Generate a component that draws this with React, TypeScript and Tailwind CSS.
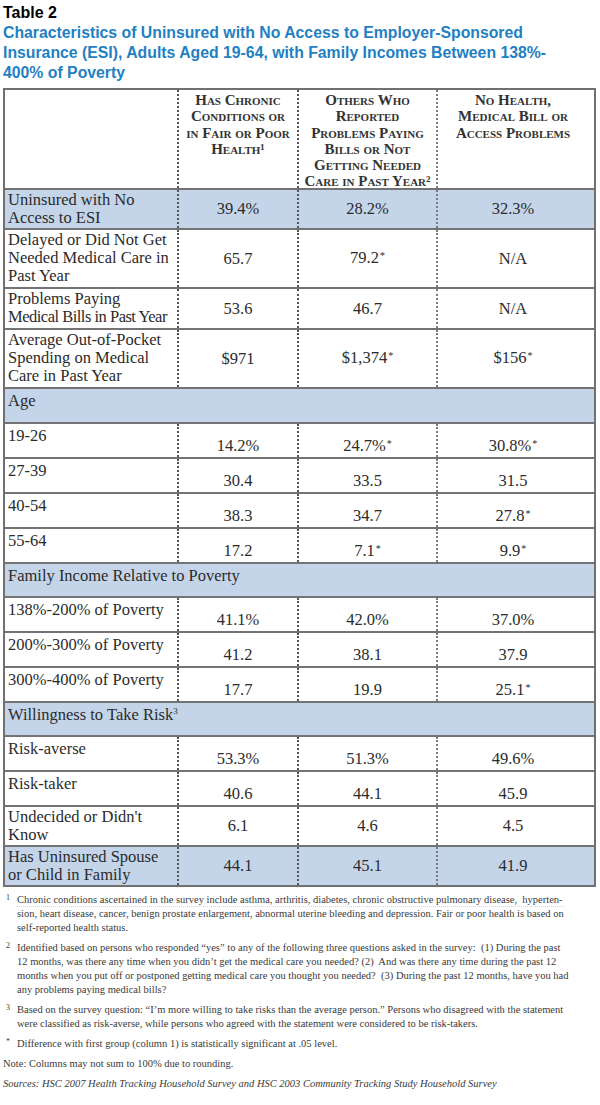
import React from 'react';

type Row = {
  label?: string[];
  vals?: string[];
  section?: string;
  sup?: string;
  blue?: boolean;
  h: string;
  multi?: boolean;
};

// heights include the 2px row rule on top
const rows: Row[] = [
  { label: ['Uninsured with No', 'Access to ESI'], vals: ['39.4%', '28.2%', '32.3%'], blue: true, h: 'h-[40px]', multi: true },
  { label: ['Delayed or Did Not Get', 'Needed Medical Care in', 'Past Year'], vals: ['65.7', '79.2*', 'N/A'], h: 'h-[59px]', multi: true },
  { label: ['Problems Paying', 'Medical Bills in Past Year'], vals: ['53.6', '46.7', 'N/A'], h: 'h-[41px]', multi: true },
  { label: ['Average Out-of-Pocket', 'Spending on Medical', 'Care in Past Year'], vals: ['$971', '$1,374*', '$156*'], h: 'h-[59px]', multi: true },
  { section: 'Age', h: 'h-[35px]' },
  { label: ['19-26'], vals: ['14.2%', '24.7%*', '30.8%*'], h: 'h-[35px]' },
  { label: ['27-39'], vals: ['30.4', '33.5', '31.5'], h: 'h-[35px]' },
  { label: ['40-54'], vals: ['38.3', '34.7', '27.8*'], h: 'h-[35px]' },
  { label: ['55-64'], vals: ['17.2', '7.1*', '9.9*'], h: 'h-[35px]' },
  { section: 'Family Income Relative to Poverty', h: 'h-[34px]' },
  { label: ['138%-200% of Poverty'], vals: ['41.1%', '42.0%', '37.0%'], h: 'h-[35px]' },
  { label: ['200%-300% of Poverty'], vals: ['41.2', '38.1', '37.9'], h: 'h-[35px]' },
  { label: ['300%-400% of Poverty'], vals: ['17.7', '19.9', '25.1*'], h: 'h-[35px]' },
  { section: 'Willingness to Take Risk', sup: '3', h: 'h-[34px]' },
  { label: ['Risk-averse'], vals: ['53.3%', '51.3%', '49.6%'], h: 'h-[35px]' },
  { label: ['Risk-taker'], vals: ['40.6', '44.1', '45.9'], h: 'h-[35px]' },
  { label: ["Undecided or Didn't", 'Know'], vals: ['6.1', '4.6', '4.5'], h: 'h-[40px]', multi: true },
  { label: ['Has Uninsured Spouse', 'or Child in Family'], vals: ['44.1', '45.1', '41.9'], blue: true, h: 'h-[40px]', multi: true },
];

const colW = ['w-[120px]', 'w-[139px]', 'w-[152px]'];
const colBorder = ['border-[#555]', 'border-[#555]', 'border-[#7a7a7a]'];

const headers = [
  ['Has Chronic', 'Conditions or', 'in Fair or Poor', 'Health¹'],
  ['Others Who', 'Reported', 'Problems Paying', 'Bills or Not', 'Getting Needed', 'Care in Past Year²'],
  ['No Health,', 'Medical Bill or', 'Access Problems'],
];

function Value({ v }: { v: string }) {
  const star = v.endsWith('*');
  const num = star ? v.slice(0, -1) : v;
  return (
    <span>
      {num}
      {star && <span className="relative -top-[4px] text-[10px] ml-[1px]">*</span>}
    </span>
  );
}

function Footnote({ mark, children }: { mark: string; children: React.ReactNode }) {
  return (
    <div className="flex">
      <div className="w-[14px] pl-[3px] text-[8px] leading-[10px]">{mark}</div>
      <div>{children}</div>
    </div>
  );
}

export default function App() {
  return (
    <div className="w-[600px] min-h-[1105px] bg-white text-[#2b2b2b]">
      {/* heading */}
      <div className="px-[3px] pt-[3px] font-['Liberation_Sans',Arial,sans-serif] font-bold">
        <div className="text-[16px] leading-[20px] text-black">Table 2</div>
        <div className="text-[15.8px] leading-[20px] text-[#1f80c3] whitespace-nowrap">
          Characteristics of Uninsured with No Access to Employer-Sponsored
          <br />
          Insurance (ESI), Adults Aged 19-64, with Family Incomes Between 138%-
          <br />
          400% of Poverty
        </div>
      </div>

      {/* table */}
      <div className="ml-[3px] mt-[5px] w-[593px] border-2 border-[#707070] font-['Liberation_Serif','Times_New_Roman',serif] text-[16.5px] leading-[18px]">
        <div className="flex h-[98px]">
          <div className="w-[172px]" />
          {headers.map((lines, i) => (
            <div
              key={i}
              className={`${colW[i]} border-l-2 border-dotted ${colBorder[i]} pt-[2px] text-center font-bold text-[15px] leading-[16.3px] [font-variant:small-caps] text-[#333] whitespace-nowrap`}
            >
              {lines.map((l) => (
                <div key={l}>{l}</div>
              ))}
            </div>
          ))}
        </div>

        {rows.map((r, idx) =>
          r.section ? (
            <div key={idx} className={`${r.h} border-t-2 border-[#737373] bg-[#c4d5ea] pl-[3px] pt-[3px]`}>
              {r.section}
              {r.sup && <span className="relative -top-[6px] text-[9px]">{r.sup}</span>}
            </div>
          ) : (
            <div key={idx} className={`${r.h} flex border-t-2 border-[#737373] ${r.blue ? 'bg-[#c4d5ea]' : ''}`}>
              <div className={`w-[172px] pl-[3px] whitespace-nowrap ${r.multi ? 'pt-[1px]' : 'pt-[3px]'}`}>
                {r.label!.map((l) => (
                  <div key={l} className={l === 'Medical Bills in Past Year' ? 'tracking-[-0.5px]' : ''}>
                    {l}
                  </div>
                ))}
              </div>
              {r.vals!.map((v, i) => (
                <div
                  key={i}
                  className={`${colW[i]} border-l-2 border-dotted ${colBorder[i]} flex justify-center ${
                    r.multi ? 'items-center' : 'pt-[13px]'
                  }`}
                >
                  <Value v={v} />
                </div>
              ))}
            </div>
          )
        )}
      </div>

      {/* footnotes */}
      <div className="mt-[6px] px-[3px] font-['Liberation_Serif','Times_New_Roman',serif] text-[10.5px] leading-[14px] text-[#3a3a3a] whitespace-nowrap flex flex-col gap-[6px]">
        <Footnote mark="1">
          <div className="border-b border-dotted border-[#d4d4d4] leading-[13px]">
            Chronic conditions ascertained in the survey include asthma, arthritis, diabetes, chronic obstructive pulmonary disease,&nbsp; hyperten-
          </div>
          sion, heart disease, cancer, benign prostate enlargement, abnormal uterine bleeding and depression. Fair or poor health is based on
          <br />
          self-reported health status.
        </Footnote>
        <Footnote mark="2">
          Identified based on persons who responded “yes” to any of the following three questions asked in the survey:&nbsp; (1) During the past
          <br />
          12 months, was there any time when you didn’t get the medical care you needed? (2)&nbsp; And was there any time during the past 12
          <br />
          months when you put off or postponed getting medical care you thought you needed?&nbsp; (3) During the past 12 months, have you had
          <br />
          any problems paying medical bills?
        </Footnote>
        <Footnote mark="3">
          Based on the survey question: “I’m more willing to take risks than the average person.” Persons who disagreed with the statement
          <br />
          were classified as risk-averse, while persons who agreed with the statement were considered to be risk-takers.
        </Footnote>
        <Footnote mark="*">Difference with first group (column 1) is statistically significant at .05 level.</Footnote>
        <div>Note: Columns may not sum to 100% due to rounding.</div>
        <div className="italic">Sources: HSC 2007 Health Tracking Household Survey and HSC 2003 Community Tracking Study Household Survey</div>
      </div>
    </div>
  );
}
